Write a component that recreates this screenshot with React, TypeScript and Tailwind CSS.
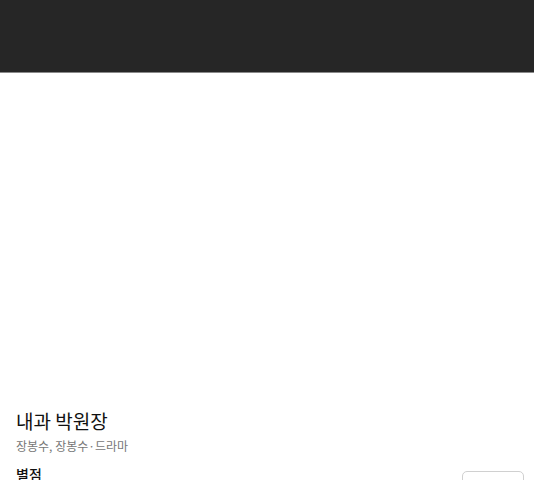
export default function App() {
  return (
    <div className="w-[534px] h-[480px] overflow-hidden bg-white" style={{ fontFamily: '"Noto Sans CJK KR", "Noto Sans", sans-serif' }}>
      <div className="h-[73px] bg-[#262626] border-b border-[#8a8a8a]" />
      <div className="h-[334px]" />
      <div className="pl-4 pr-[10px]">
        <h1 className="text-[19px] leading-[28px] font-normal text-[#111]">내과 박원장</h1>
        <p className="mt-[2px] text-[12px] leading-[18px] text-[#777]">장봉수, 장봉수·드라마</p>
        <div className="mt-[10px] flex items-start justify-between">
          <div className="text-[14px] leading-[20px] font-medium text-[#111] -mt-[1px]">별점</div>
          <div className="mt-[6px] w-[62px] h-[32px] rounded-[5px] border border-[#d0d0d0]" />
        </div>
      </div>
    </div>
  );
}
